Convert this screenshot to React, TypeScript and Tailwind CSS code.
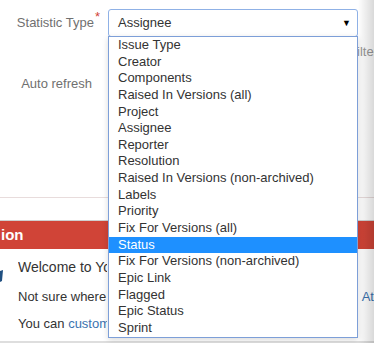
import React from 'react';

const statisticTypes = [
  'Issue Type',
  'Creator',
  'Components',
  'Raised In Versions (all)',
  'Project',
  'Assignee',
  'Reporter',
  'Resolution',
  'Raised In Versions (non-archived)',
  'Labels',
  'Priority',
  'Fix For Versions (all)',
  'Status',
  'Fix For Versions (non-archived)',
  'Epic Link',
  'Flagged',
  'Epic Status',
  'Sprint',
];

export default function App() {
  const selected = 'Status';

  return (
    <div className="relative flex flex-col w-[374px] h-[343px] overflow-hidden bg-white font-['Liberation_Sans',Arial,sans-serif] text-[13px] leading-[16px] text-[#333]">
      {/* Gadget config form */}
      <div className="h-[198px] shrink-0 border-b border-[#e8dcdc] pt-[9px]">
        <div className="flex items-center">
          <label className="w-[100px] text-right text-[#707070]">
            Statistic Type
            <span className="relative -top-[6px] ml-[1px] text-[#d04437]">*</span>
          </label>
          <div className="ml-[8px] flex h-[28px] w-[250px] items-center justify-between rounded-[3px] border border-[#8fb1e6] bg-white pl-[9px] pr-[6px]">
            <span>Assignee</span>
            <span className="text-[9px] text-black">▼</span>
          </div>
        </div>
        {/* help text, mostly hidden behind the open list */}
        <div className="mt-[7px] ml-[358px] overflow-hidden whitespace-nowrap text-[#999]">
          <span className="-ml-[1px]">ilter</span>
        </div>
        <div className="mt-[16px] w-[92px] text-right text-[#707070]">Auto refresh</div>
      </div>

      {/* Introduction gadget */}
      <div className="mt-[22px] flex h-[29px] shrink-0 items-center border-t border-[#cfcfcf] bg-[#d04437] pl-[1px] text-[15px] font-bold text-white">
        ion
      </div>
      <div className="relative flex-1 border-b-2 border-[#dedede] pl-[18px] pt-[8px]">
        <svg className="absolute left-0 top-[20px]" width="4" height="14" viewBox="0 0 4 14">
          <path d="M0 2 L3 1 L2 12 L0 13 Z" fill="#205081" />
        </svg>
        <div className="w-[89px] overflow-hidden whitespace-nowrap text-[14px] leading-[20px]">Welcome to Yo</div>
        <div className="mt-[10px] flex leading-[20px]">
          <span className="w-[89px] overflow-hidden whitespace-nowrap">Not sure where</span>
          <a className="ml-[255px] whitespace-nowrap text-[#3b73af]">At</a>
        </div>
        <div className="mt-[7px] w-[89px] overflow-hidden whitespace-nowrap leading-[20px]">
          You can <a className="text-[#3b73af]">custom</a>
        </div>
      </div>

      {/* page edge shading */}
      <div className="pointer-events-none absolute right-0 top-0 h-full w-[16px] bg-linear-to-r from-transparent to-black/15" />

      {/* Open select list */}
      <ul className="absolute left-[108px] top-[36px] w-[250px] border border-[#7d9fd8] bg-white shadow-[0_2px_6px_rgba(0,0,0,0.15)]">
        {statisticTypes.map((t) => (
          <li
            key={t}
            className={
              t === selected
                ? 'h-[16.65px] whitespace-nowrap bg-[#1e90ff] pl-[9px] leading-[16.65px] text-white'
                : 'h-[16.65px] whitespace-nowrap pl-[9px] leading-[16.65px] text-[#333]'
            }
          >
            {t}
          </li>
        ))}
      </ul>
    </div>
  );
}
